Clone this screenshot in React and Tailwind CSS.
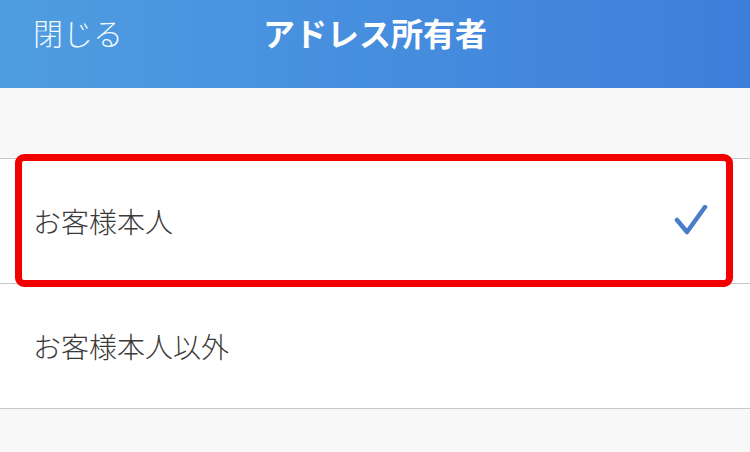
import React from "react";

const font = { fontFamily: '"Noto Sans CJK JP", "Noto Sans", sans-serif' };

function Check() {
  return (
    <svg width="34" height="32" viewBox="0 0 34 32" className="shrink-0">
      <polyline points="3,15 13,27 31,2" fill="none" stroke="#4a7dc9" strokeWidth="4.5" strokeLinecap="round" strokeLinejoin="round" />
    </svg>
  );
}

function Row({ label, checked }) {
  return (
    <div className="flex h-[125px] items-center justify-between border-b border-[#c8c8cc] bg-white pl-[33px] pr-[42px]">
      <span className="text-[28px] font-light leading-none text-[#3a3a3a]">{label}</span>
      {checked && <Check />}
    </div>
  );
}

export default function App() {
  return (
    <div className="h-[452px] w-[750px] overflow-hidden bg-[#f8f8f8]" style={font}>
      <header className="relative flex h-[88px] items-start bg-gradient-to-r from-[#4f9de1] to-[#3e7edb] pt-[17px]">
        <span className="pl-[33px] text-[30px] font-light leading-none text-white/95">閉じる</span>
        <h1 className="absolute inset-x-0 top-[16px] text-center text-[32px] font-bold leading-none text-white">
          アドレス所有者
        </h1>
      </header>

      <div className="h-[70px]" />

      <div className="relative border-t border-[#c8c8cc]">
        <Row label="お客様本人" checked />
        <Row label="お客様本人以外" />
        <div className="pointer-events-none absolute left-[15px] top-[-5px] h-[133px] w-[718px] rounded-[9px] border-[7px] border-[#f20000]" />
      </div>
    </div>
  );
}
